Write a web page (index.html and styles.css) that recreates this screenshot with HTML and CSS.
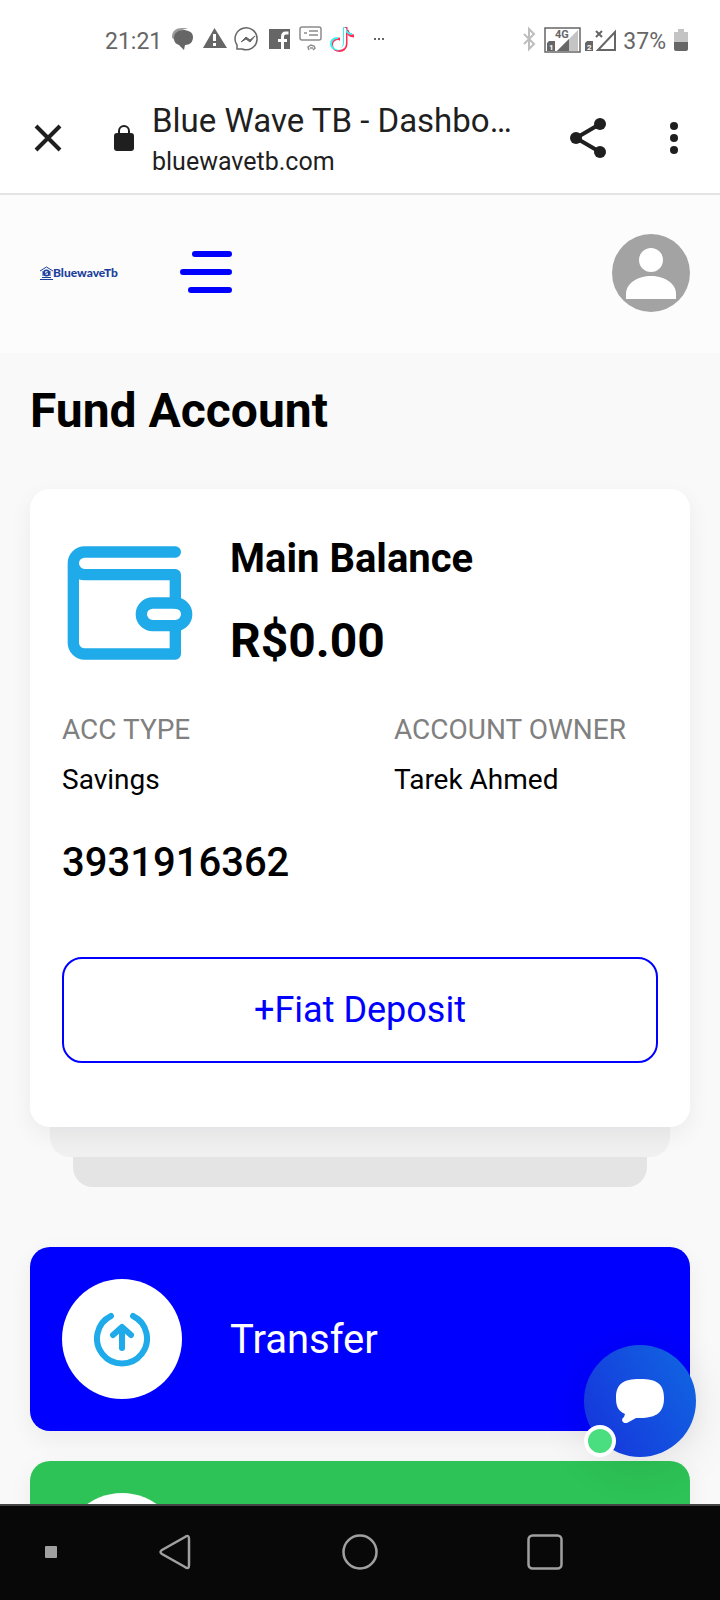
FILE: index.html
```html
<!DOCTYPE html>
<html lang="en">
<head>
<meta charset="utf-8">
<meta name="viewport" content="width=device-width, initial-scale=1">
<title>Blue Wave TB - Dashboard</title>
<link rel="stylesheet" href="styles.css">
</head>
<body>
<div class="screen">
  <div class="status">
    <span class="clock">21:21</span>
    <svg class="status-icons" width="214" height="28" viewBox="0 0 214 28" aria-hidden="true">
      <path d="M1 11C1 5 5 2 11 2h6l-9 3c-3 1-4 4-4 9-2-1-3-2-3-3z" fill="#9a9a9a"/>
      <path d="M3 12c0-5 4-8 9-8s10 2 10 7-3 8-8 8l-1 5-5-5c-3-1-5-3-5-7z" fill="#666"/>
      <path d="M43.500 2L56 22H32z" fill="#666"/>
      <path d="M43.500 8v7M43.500 17v3" stroke="#fff" stroke-width="3"/>
      <path d="M66 23v-4a11 11 0 1 1 5 4z" fill="none" stroke="#666" stroke-width="1.500"/>
      <path d="M70 16l5-5 4 3 5-4-5 6-4-3z" fill="#666" stroke="#666"/>
      <rect x="98" y="3" width="21" height="20" fill="#666"/>
      <path d="M111.500 23v-12q0-4 3-4h3M107 14.500h9" fill="none" stroke="#fff" stroke-width="3"/>
      <rect x="129" y="1" width="21" height="13" rx="2" fill="none" stroke="#8c8c8c" stroke-width="1.500"/>
      <path d="M138 5h9M138 9h9M133 7h3" fill="none" stroke="#8c8c8c" stroke-width="1.500"/>
      <path d="M138 24l-1-3 3-2 3 1 1 2-2 2M139 22h3" fill="none" stroke="#8c8c8c" stroke-width="1.500"/>
      <path d="M175 1v17c0 9-13 8-13 1 0-4 3-6 7-6M176 4c1 4 3 6 7 6" fill="none" stroke="#ff2b55" stroke-width="3"/>
      <path d="M173 1v16c0 9-13 8-13 1 0-4 3-6 7-6M174 2c1 4 3 6 7 6" fill="none" stroke="#3df0ee" stroke-width="2"/>
      <path d="M174 2v15c0 8-11 7-11 2 0-3 2-4 5-4" fill="none" stroke="#fff" stroke-width="2"/>
      <path d="M203 13h2M207 13h2M211 13h2" stroke="#666" stroke-width="2"/>
    </svg>
    <svg class="signal-icons" width="94" height="28" viewBox="0 0 94 28" aria-hidden="true">
      <path d="M1 8l10 10-5 5V3l5 5L1 18" fill="none" stroke="#bdbdbd" stroke-width="2"/>
      <rect x="22" y="2" width="35" height="24" fill="none" stroke="#666" stroke-width="1.500"/>
      <path d="M34 25l21-21v21z" fill="#c4c4c4"/>
      <path d="M34 25l12-12v12z" fill="#666"/>
      <text class="sig-main" x="32" y="12">4G</text>
      <path d="M24 25v-8l2-2h6v10zM62 25v-8l2-2h6v10z" fill="#666"/>
      <text class="sig-sim" x="26" y="24">1</text>
      <text class="sig-sim" x="64" y="24">2</text>
      <path d="M73 5l6 6M79 5l-6 6" stroke="#666" stroke-width="2"/>
      <path d="M75 24L92 6v18z" fill="none" stroke="#666" stroke-width="2"/>
    </svg>
    <span class="battery-text">37%</span>
    <svg width="14" height="22" viewBox="0 0 14 22" aria-hidden="true">
      <path d="M4 0h6v3h4v10H0V3h4z" fill="#c4c4c4"/>
      <path d="M0 13h14v7q0 2-2 2H2q-2 0-2-2z" fill="#666"/>
    </svg>
  </div>

  <div class="browser">
    <button class="icon-btn close" aria-label="Close tab">
      <svg width="28" height="28" viewBox="0 0 28 28"><path d="M2 2l24 24M26 2L2 26" stroke="#1f1f1f" stroke-width="4"/></svg>
    </button>
    <svg class="lock" width="20" height="26" viewBox="0 0 20 26" aria-hidden="true">
      <rect y="8" width="20" height="18" rx="3" fill="#1f1f1f"/>
      <path d="M5 9V6a5 5 0 0 1 10 0v3" fill="none" stroke="#1f1f1f" stroke-width="2"/>
    </svg>
    <div class="page-info">
      <div class="page-title">Blue Wave TB - Dashbo…</div>
      <div class="page-url">bluewavetb.com</div>
    </div>
    <button class="icon-btn share" aria-label="Share">
      <svg width="36" height="40" viewBox="0 0 36 40"><path d="M30 6L6 20l24 14" fill="none" stroke="#1f1f1f" stroke-width="4"/><g fill="#1f1f1f"><circle cx="30" cy="6" r="6"/><circle cx="6" cy="20" r="6"/><circle cx="30" cy="34" r="6"/></g></svg>
    </button>
    <button class="icon-btn more" aria-label="More options">
      <svg width="8" height="32" viewBox="0 0 8 32"><g fill="#1f1f1f"><circle cx="4" cy="4" r="4"/><circle cx="4" cy="16" r="4"/><circle cx="4" cy="28" r="4"/></g></svg>
    </button>
  </div>

  <div class="viewport">
    <header class="site-header">
      <a class="logo" href="#">
        <svg width="13" height="14" viewBox="0 0 13 14" aria-hidden="true"><path d="M0 5l6.500-4L13 5M0 13.500h13M2 11.500h9M3 5v5M10 5v5" fill="none" stroke="#1b3f9c"/><circle cx="6.500" cy="7" r="3.500" fill="#1b3f9c"/><path d="M7.500 5.500h-2v1.500h2v1.500h-2" fill="none" stroke="#fff" stroke-width=".8"/></svg>
        <span>BluewaveTb</span>
      </a>
      <button class="icon-btn menu" aria-label="Menu">
        <svg width="52" height="42" viewBox="0 0 52 42"><path d="M15 3h34M3 21h46M11 39h38" stroke="#00f" stroke-width="6" stroke-linecap="round"/></svg>
      </button>
      <button class="icon-btn avatar" aria-label="Profile">
        <svg width="78" height="78" viewBox="0 0 78 78"><circle cx="39" cy="39" r="39" fill="#a3a3a3"/><circle cx="39" cy="26" r="12" fill="#fff"/><path d="M14 65v-5c0-11 12-18 25-18s25 7 25 18v5z" fill="#fff"/></svg>
      </button>
    </header>

    <main class="content">
      <h1 class="heading">Fund Account</h1>

      <div class="stack">
        <section class="card">
          <div class="balance">
            <svg width="136" height="136" viewBox="0 0 24 24" fill="none" stroke="#1faae9" stroke-width="2" stroke-linecap="round" stroke-linejoin="round" aria-hidden="true">
              <path d="M20 12V7H4a2 2 0 0 1 0-4h16M2 5v14a2 2 0 0 0 2 2h16v-5"/>
              <path d="M16 12h4a2 2 0 0 1 0 4h-4a2 2 0 0 1 0-4z"/>
            </svg>
            <div>
              <h2 class="balance-label">Main Balance</h2>
              <p class="balance-value">R$0.00</p>
            </div>
          </div>
          <dl class="details">
            <div><dt>ACC TYPE</dt><dd>Savings</dd></div>
            <div><dt>ACCOUNT OWNER</dt><dd>Tarek Ahmed</dd></div>
          </dl>
          <p class="number">3931916362</p>
          <button class="deposit">+Fiat Deposit</button>
        </section>
        <div class="layer layer-one"></div>
        <div class="layer layer-two"></div>
      </div>

      <a class="action transfer" href="#">
        <span class="action-icon">
          <svg width="56" height="56" viewBox="0 0 56 56" fill="none" stroke="#1faae9" stroke-width="6" stroke-linecap="round" stroke-linejoin="round" aria-hidden="true"><path d="M17 5a25 25 0 1 0 22 0M28 37V17M19 24l9-8 9 8"/></svg>
        </span>
        <span>Transfer</span>
      </a>
      <a class="action receive" href="#" aria-label="Receive"><span class="action-icon"></span></a>
    </main>

    <button class="chat" aria-label="Open chat">
      <svg width="48" height="44" viewBox="0 0 48 44" aria-hidden="true"><path d="M24 0c17 0 24 5 24 19s-7 20-24 20h-4l-9 5c-4 1-7-3-3-6l1-3C2 32 0 27 0 19 0 5 7 0 24 0z" fill="#fff"/></svg>
      <span class="online"></span>
    </button>
  </div>

  <nav class="system-nav" aria-label="System">
    <button class="icon-btn hide-key" aria-label="Hide bar"><svg width="12" height="12" viewBox="0 0 12 12"><rect width="12" height="12" rx="1" fill="#a0a0a0"/></svg></button>
    <button class="icon-btn" aria-label="Back"><svg width="34" height="36" viewBox="0 0 34 36"><path d="M27 3Q31 0 31 5v26q0 5-4 2L4 20q-3-2 0-4z" fill="none" stroke="#a0a0a0" stroke-width="2.500"/></svg></button>
    <button class="icon-btn" aria-label="Home"><svg width="36" height="36" viewBox="0 0 36 36"><circle cx="18" cy="18" r="16.500" fill="none" stroke="#a0a0a0" stroke-width="2.500"/></svg></button>
    <button class="icon-btn" aria-label="Recent apps"><svg width="36" height="36" viewBox="0 0 36 36"><rect x="1.500" y="1.500" width="33" height="33" rx="4" fill="none" stroke="#a0a0a0" stroke-width="2.500"/></svg></button>
  </nav>
</div>
</body>
</html>
```
FILE: styles.css
```css
* { box-sizing: border-box; }

body {
  margin: 0;
  font-family: Roboto, "Liberation Sans", sans-serif;
  color: #000;
  background: #f9f9f9;
}

h1, h2, p, dl, dd { margin: 0; }
a { text-decoration: none; color: inherit; }
svg { display: block; flex: none; }

.screen {
  display: flex;
  flex-direction: column;
  height: 100vh;
}

.icon-btn {
  display: flex;
  align-items: center;
  justify-content: center;
  flex: none;
  padding: 0;
  border: 0;
  background: none;
}

.status {
  display: flex;
  align-items: center;
  height: 80px;
  padding: 0 32px 0 105px;
  background: #fff;
  color: #666;
  flex: none;
}
.clock { font-size: 23px; padding-top: 2px; }
.status-icons { margin-left: 9px; }
.signal-icons { margin-left: auto; }
.battery-text { margin: 2px 8px 0 6px; font-size: 23px; }
.sig-main { font-size: 11px; font-weight: 700; fill: #666; }
.sig-sim { font-size: 8px; font-weight: 700; fill: #fff; }

.browser {
  display: flex;
  align-items: center;
  padding: 17px 42px 15px 34px;
  background: #fff;
  color: #1f1f1f;
  border-bottom: 2px solid #e4e4e4;
  flex: none;
}
.lock { margin-left: 52px; }
.page-info { flex: 1; min-width: 0; margin-left: 18px; }
.page-title { font-size: 33px; line-height: 48px; white-space: nowrap; }
.page-url { font-size: 25px; line-height: 33px; }
.share { margin-right: 64px; }

.viewport {
  position: relative;
  flex: 1;
  min-height: 0;
  overflow: hidden;
}

.site-header {
  display: flex;
  align-items: center;
  padding: 39px 30px 41px 40px;
  background: #fcfcfc;
}
.logo {
  display: flex;
  align-items: center;
  color: #1b3f9c;
  font: 900 12px/14px Lato, sans-serif;
}
.menu { margin-left: 62px; padding-bottom: 2px; }
.avatar { margin-left: auto; }

.content { padding: 28px 30px; }
.heading { font-size: 48px; line-height: 60px; font-weight: 700; }

.stack { margin: 48px 0 60px; }
.card {
  position: relative;
  padding: 46px 32px 64px;
  border-radius: 20px;
  background: #fff;
  box-shadow: 0 8px 24px rgba(20, 20, 43, 0.06);
}
.balance { display: flex; gap: 32px; }
.balance-label { font-size: 40px; line-height: 48px; font-weight: 700; }
.balance-value { margin-top: 28px; font-size: 48px; line-height: 60px; font-weight: 700; }

.details {
  display: grid;
  grid-template-columns: 332px 1fr;
  margin-top: 34px;
  font-size: 28px;
  line-height: 50px;
}
.details dt { color: #808080; }
.number { margin-top: 28px; font-size: 40px; line-height: 60px; font-weight: 500; }

.deposit {
  display: block;
  width: 100%;
  height: 106px;
  margin-top: 64px;
  border: 2px solid #00f;
  border-radius: 20px;
  background: #fff;
  color: #00f;
  font-family: inherit;
  font-size: 36px;
}

.layer { height: 30px; border-radius: 0 0 20px 20px; }
.layer-one { margin: 0 20px; background: #f0f0f0; }
.layer-two { margin: 0 43px; background: #e4e4e4; }

.action {
  display: flex;
  align-items: center;
  gap: 48px;
  padding: 32px;
  border-radius: 20px;
  color: #fff;
  font-size: 40px;
  box-shadow: 0 8px 24px rgba(20, 20, 43, 0.06);
}
.action + .action { margin-top: 30px; }
.transfer { background: #00f; }
.receive { background: #2dc356; }
.action-icon {
  display: flex;
  align-items: center;
  justify-content: center;
  width: 120px;
  height: 120px;
  border-radius: 50%;
  background: #fff;
}

.chat {
  position: absolute;
  right: 24px;
  bottom: 47px;
  display: flex;
  align-items: center;
  justify-content: center;
  width: 112px;
  height: 112px;
  padding: 0;
  border: 0;
  border-radius: 50%;
  background: linear-gradient(60deg, #1637dc 10%, #1068e2 100%);
  box-shadow: 0 8px 48px rgba(0, 0, 0, 0.1);
}
.online {
  position: absolute;
  left: 0;
  bottom: 0;
  width: 32px;
  height: 32px;
  border: 4px solid #fff;
  border-radius: 50%;
  background: #4ade80;
}

.system-nav {
  display: grid;
  grid-template-columns: 23fr 51fr 51fr 51fr 23fr;
  height: 96px;
  padding-bottom: 2px;
  background: #080808;
  border-top: 2px solid #444;
  flex: none;
}
.hide-key { padding-left: 18px; }
```
